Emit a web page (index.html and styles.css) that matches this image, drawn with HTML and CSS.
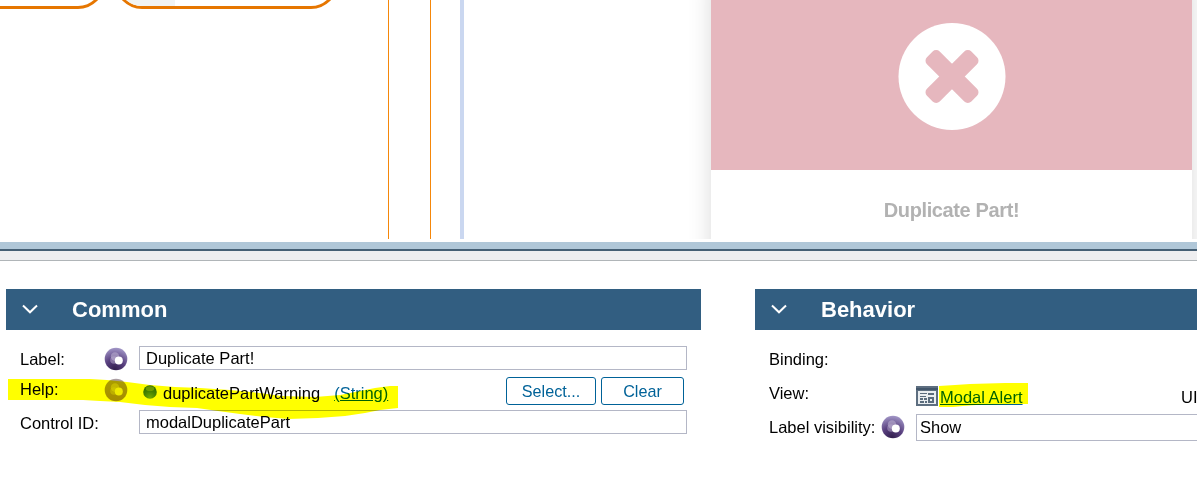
FILE: index.html
```html
<!DOCTYPE html>
<html lang="en">
<head>
<meta charset="utf-8">
<title>Modal properties</title>
<link rel="stylesheet" href="styles.css">
</head>
<body>
<svg class="defs" width="0" height="0">
  <defs>
    <radialGradient id="purple" cx=".45" cy=".95" r="1">
      <stop offset="0" stop-color="#33204f"/><stop offset=".45" stop-color="#59407f"/><stop offset="1" stop-color="#aaa0cf"/>
    </radialGradient>
    <linearGradient id="faded" x2="0" y2="1">
      <stop offset="0" stop-color="#ab9fae"/><stop offset=".3" stop-color="#a99848"/><stop offset="1" stop-color="#a58c30"/>
    </linearGradient>
    <radialGradient id="green" cx=".5" cy=".9" r=".95">
      <stop offset="0" stop-color="#72a800"/><stop offset=".5" stop-color="#438000"/><stop offset="1" stop-color="#2c6812"/>
    </radialGradient>
    <symbol id="orb" viewBox="0 0 24 24">
      <circle cx="12" cy="12" r="11.3" fill="url(#purple)"/>
      <circle cx="11" cy="9.5" r="4.2" fill="#b9adcf" opacity=".6"/>
      <circle cx="10" cy="13" r="3.8" fill="#b9adcf" opacity=".5"/>
      <circle cx="14.8" cy="13.5" r="4" fill="#fff"/>
    </symbol>
    <symbol id="orb-faded" viewBox="0 0 24 24">
      <circle cx="12" cy="12" r="11.3" fill="url(#faded)"/>
      <circle cx="11" cy="9.5" r="4.2" fill="#e0d850" opacity=".5"/>
      <circle cx="10" cy="13" r="3.8" fill="#d8d050" opacity=".45"/>
      <circle cx="14.8" cy="13.5" r="4" fill="#efea60"/>
    </symbol>
  </defs>
</svg>
<main class="app">
  <section class="canvas">
    <div class="flow">
      <div class="pills">
        <div class="pill pill-first"></div>
        <div class="pill pill-second"><span class="pill-cap"></span></div>
      </div>
      <div class="lane"></div>
    </div>
    <div class="preview">
      <article class="modal">
        <div class="modal-top">
          <svg width="108" height="108" viewBox="0 0 108 108">
            <circle cx="54" cy="53.5" r="53.5" fill="#fff"/>
            <g fill="#e6b7be" transform="translate(54 53.5) rotate(45)">
              <rect x="-31.4" y="-9" width="62.8" height="18" rx="5"/>
              <rect x="-9" y="-31.4" width="18" height="62.8" rx="5"/>
            </g>
          </svg>
        </div>
        <h1 class="modal-title">Duplicate Part!</h1>
      </article>
    </div>
  </section>
  <div class="splitter"></div>
  <div class="strip"></div>
  <section class="properties">
    <div class="panel common">
      <h2 class="panel-head"><svg width="16" height="10" viewBox="0 0 16 10"><path d="M1 1.5 8 8.3 15 1.5"/></svg><span>Common</span></h2>
      <div class="rows">
        <div class="row label-row"><label>Label:</label><svg class="orb"><use href="#orb"/></svg><div class="field">Duplicate Part!</div></div>
        <div class="row help-row"><label>Help:</label><svg class="orb"><use href="#orb-faded"/></svg>
          <div class="help-value"><svg class="dot" width="14" height="14"><circle cx="7" cy="7" r="6.8" fill="url(#green)"/><ellipse cx="7" cy="3.7" rx="4.2" ry="2.4" fill="#91b779" opacity=".55"/></svg><span>duplicatePartWarning</span><a>(String)</a></div>
          <div class="actions"><button class="button select">Select...</button><button class="button clear">Clear</button></div>
        </div>
        <div class="row id-row"><label>Control ID:</label><div class="field">modalDuplicatePart</div></div>
      </div>
    </div>
    <div class="panel behavior">
      <h2 class="panel-head"><svg width="16" height="10" viewBox="0 0 16 10"><path d="M1 1.5 8 8.3 15 1.5"/></svg><span>Behavior</span></h2>
      <div class="rows">
        <div class="row binding-row"><label>Binding:</label></div>
        <div class="row view-row"><label>View:</label>
          <div class="view-value">
            <svg width="22" height="20" viewBox="0 0 22 20"><path fill="#5d6e80" d="M0 0h22v20H0z"/><path fill="#42566b" d="M0 2h22v2H0z"/><path fill="#e9edf0" d="M2 5h18v13H2z"/><path fill="#5b6c7d" d="M4 7h7v1H4zM12 7h6v2h-6zM4 10h6v1H4zM4 12h3v2H4zM8 12h3v2H8zM4 15h4v2H4zM9 15h2v2H9zM12 11h6v6h-6z"/><path fill="#e9edf0" d="M14 13h2v2h-2z"/></svg><a>Modal Alert</a>
          </div>
          <span class="view-kind">UI</span>
        </div>
        <div class="row visibility-row"><label>Label visibility:</label><svg class="orb"><use href="#orb"/></svg><div class="field">Show</div></div>
      </div>
    </div>
  </section>
</main>
<svg class="marker" width="1197" height="477" viewBox="0 0 1197 477">
  <path d="M8 379H90L107 380 127 382 150 385 175 387 200 388 230 390 260 393 282 396 315 397 340 395 360 391 375 388 390 386H398V408L380 410 365 413 345 416 318 418 288 419 265 417 240 414 218 411 197 408 170 407 145 405 120 402 100 401 83 400H8Z"/>
  <path d="M939 386 955 385 970 384 1005 383H1028V404H1014L976 405 963 406 953 407H939Z"/>
</svg>
</body>
</html>
```
FILE: styles.css
```css
* { box-sizing: border-box; }
body {
  margin: 0;
  overflow: hidden;
  background: #fff;
  color: #000;
  font: 16.5px/18px "Liberation Sans", Arial, sans-serif;
}
.defs { position: absolute; }
.app { width: 1197px; height: 477px; display: flex; flex-direction: column; overflow: hidden; }
.canvas { height: 239px; display: flex; overflow: hidden; flex: none; }
.flow { width: 464px; height: 239px; border-right: 4px solid #cad7f0; display: flex; flex: none; justify-content: space-between; padding-right: 29px; }
.pills { display: flex; gap: 10px; width: 340px; margin-top: -45px; }
.pill { height: 54px; border: 3px solid #e67600; flex: none; overflow: hidden; }
.pill-first { width: 105px; border-left: 0; border-radius: 0 27px 27px 0; }
.pill-second { width: 223px; border-radius: 27px; }
.pill-cap { display: block; width: 57px; height: 100%; background: #f1f3f3; }
.lane { width: 43px; border: solid #f5870a; border-width: 0 1px; flex: none; }
.preview { flex: 1; padding-left: 247px; overflow: hidden; }
.modal { width: 481px; height: 290px; margin-top: -20px; background: #fff; box-shadow: 0 0 22px rgba(0, 0, 0, .15); }
.modal-top { height: 190px; padding: 43px 0 0 187px; background: #e6b7be; }
.modal-top svg { display: block; }
.modal-title { margin: 29px 0 0; color: #b2b2b2; font-size: 20px; line-height: 23px; letter-spacing: -.38px; text-align: center; }
.splitter { height: 12px; border-top: 3px solid #fff; border-bottom: 2px solid #455f74; background: #b0c7d8; flex: none; }
.strip { height: 10px; background: #eeeef0; border-bottom: 1px solid #b0b5b8; flex: none; }
.properties { display: flex; gap: 54px; padding: 28px 0 0 6px; }
.panel { flex: none; }
.common { width: 695px; }
.behavior { width: 500px; }
.panel-head { display: flex; align-items: center; gap: 34px; height: 41px; margin: 0; padding: 1px 0 0 16px; background: #325e81; color: #fff; font-size: 22px; line-height: 26px; }
.panel-head svg { margin-top: -2px; fill: none; stroke: #fff; stroke-width: 2; }
.rows { padding: 16px 14px 0; }
.row { display: flex; align-items: flex-start; }
.row label { flex: none; width: 84px; padding-top: 4px; white-space: nowrap; }
.orb { width: 24px; height: 24px; flex: none; }
.field { flex: 1; height: 24px; border: 1px solid #b4b7c6; background: #fff; padding: 2px 6px; }
.label-row { height: 31px; }
.label-row .orb { margin-top: 1px; }
.label-row .field { margin-left: 11px; }
.help-row { height: 33px; }
.row.help-row label { padding-top: 3px; }
.help-row .orb { margin-top: 1px; }
.help-value { display: flex; width: 363px; margin-left: 15px; padding-top: 7px; }
.help-value .dot { margin-right: 6px; margin-top: 1px; }
.help-value a { margin-left: 14px; }
a { color: #006298; text-decoration: underline; }
.actions { display: flex; gap: 5px; }
.button { height: 28px; padding: 0; border: 1px solid #006298; border-radius: 3px; background: #fff; color: #006298; font: 16.2px/18px "Liberation Sans", Arial, sans-serif; }
.select { width: 90px; }
.clear { width: 83px; }
.id-row label { width: 119px; }
.binding-row { height: 34px; }
.view-row { height: 34px; }
.view-row label { width: 147px; }
.view-value { display: flex; gap: 2px; width: 265px; padding-top: 6px; }
.view-value a { margin-top: 2px; }
.view-kind { padding-top: 8px; }
.visibility-row label { width: 112px; }
.visibility-row .orb { margin-top: 1px; }
.visibility-row .field { height: 27px; margin-left: 11px; padding: 3px; }
.marker { position: absolute; left: 0; top: 0; fill: #ff0; mix-blend-mode: multiply; pointer-events: none; }
```
